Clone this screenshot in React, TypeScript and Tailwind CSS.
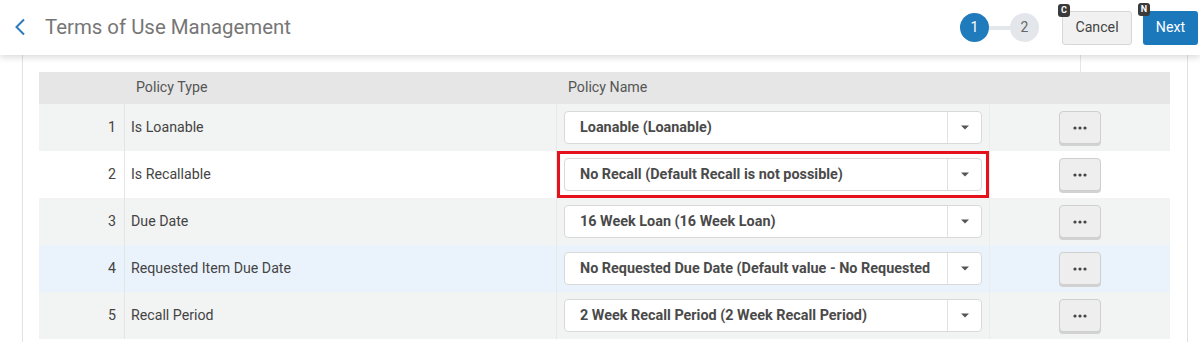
import React from 'react';

type Row = {
	no: number;
	type: string;
	policy: string;
	bg: string;
	marked?: boolean;
};

const rows: Row[] = [
	{ no: 1, type: 'Is Loanable', policy: 'Loanable (Loanable)', bg: 'bg-[#f2f3f3]' },
	{
		no: 2,
		type: 'Is Recallable',
		policy: 'No Recall (Default Recall is not possible)',
		bg: 'bg-white',
		marked: true,
	},
	{ no: 3, type: 'Due Date', policy: '16 Week Loan (16 Week Loan)', bg: 'bg-[#f2f3f3]' },
	{
		no: 4,
		type: 'Requested Item Due Date',
		policy: 'No Requested Due Date (Default value - No Requested',
		bg: 'bg-[#eaf3fc]',
	},
	{
		no: 5,
		type: 'Recall Period',
		policy: '2 Week Recall Period (2 Week Recall Period)',
		bg: 'bg-[#f2f3f3]',
	},
];

const Badge = ({ letter }: { letter: string }) => (
	<span className="absolute -left-[5px] -top-[8px] flex h-[13px] w-[12px] items-center justify-center rounded-[3px] bg-[#3a3a3a] text-[9px] font-bold leading-none text-white">
		{letter}
	</span>
);

const PolicySelect = ({ value }: { value: string }) => (
	<div className="flex h-[33px] w-full items-stretch rounded-[4px] border border-[#d9d9d9] bg-white">
		<div className="flex min-w-0 flex-1 items-center overflow-hidden whitespace-nowrap pl-[15px] pr-2 text-[14.4px] font-bold text-[#4a4a4a]">
			{value}
		</div>
		<div className="flex w-[34px] items-center justify-center border-l border-[#e2e2e2]">
			<svg width="8" height="5" viewBox="0 0 8 5">
				<path d="M0 0.5H8L4 4.5Z" fill="#555" />
			</svg>
		</div>
	</div>
);

export default function App() {
	return (
		<div className="h-[342px] w-[1200px] overflow-hidden bg-white font-['Roboto',sans-serif]">
			{/* header */}
			<div className="relative z-10 flex h-[55px] items-center bg-white shadow-[0_3px_6px_rgba(0,0,0,0.13)]">
				<div className="flex items-center pl-[14px]">
					<svg width="12" height="18" viewBox="0 0 12 18">
						<path d="M10 1.5L2.5 9L10 16.5" stroke="#2b7cbf" strokeWidth="2" fill="none" />
					</svg>
					<span className="ml-[19px] text-[20.4px] text-[#767676]">Terms of Use Management</span>
				</div>
				<div className="ml-auto flex items-center">
					<div className="flex items-center">
						<div className="flex h-[29px] w-[29px] items-center justify-center rounded-full bg-[#1f7bbb] text-[14px] text-white">
							1
						</div>
						<div className="h-[4px] w-[21px] bg-[#e3e7eb]" />
						<div className="flex h-[29px] w-[29px] items-center justify-center rounded-full bg-[#e3e7eb] text-[14px] text-[#666]">
							2
						</div>
					</div>
					<button className="relative ml-[23px] h-[34px] w-[70px] rounded-[3px] border border-[#d6d6d6] bg-[#f1f1f1] text-[14.2px] text-[#444]">
						<Badge letter="C" />
						Cancel
					</button>
					<button className="relative ml-[11px] mr-[2px] h-[34px] w-[55px] rounded-[3px] bg-[#1a78bb] text-[14.2px] text-white">
						<Badge letter="N" />
						Next
					</button>
				</div>
			</div>

			{/* content */}
			<div className="ml-[22px] h-[287px] w-[1166px] border-x border-[#e2e2e2] px-[16px]">
				<div className="flex h-[17px]">
					<div className="ml-[1041px] w-px bg-[#e6e6e6]" />
				</div>
				<div className="w-[1131px]">
					<div className="grid h-[32px] grid-cols-[86px_432px_433px_180px] items-center bg-[#e6e6e6] text-[14.2px] text-[#555]">
						<div />
						<div className="pl-[11px]">Policy Type</div>
						<div className="pl-[11px]">Policy Name</div>
						<div />
					</div>
					{rows.map(r => (
						<div
							key={r.no}
							className={`grid h-[47px] grid-cols-[86px_432px_433px_180px] text-[14.2px] text-[#444] ${r.bg}`}
						>
							<div className="flex items-center justify-end border-r border-[#e4e4e4] pr-[8px]">
								{r.no}
							</div>
							<div className="flex items-center border-r border-[#e8e8e8] pl-[6px]">{r.type}</div>
							<div
								className={`flex items-center border-r border-[#ececec] px-[7px] ${
									r.marked ? 'shadow-[inset_0_0_0_3px_#e5121c]' : ''
								}`}
							>
								<PolicySelect value={r.policy} />
							</div>
							<div className="flex items-center justify-center">
								<button className="flex h-[33px] w-[42px] items-center justify-center rounded-[4px] border border-[#cfcfcf] bg-[#eeeeee] shadow-[0_2px_0_#d2d2d2]">
									<svg width="14" height="4" viewBox="0 0 14 4">
										<circle cx="2" cy="2" r="1.6" fill="#444" />
										<circle cx="7" cy="2" r="1.6" fill="#444" />
										<circle cx="12" cy="2" r="1.6" fill="#444" />
									</svg>
								</button>
							</div>
						</div>
					))}
				</div>
			</div>
		</div>
	);
}
